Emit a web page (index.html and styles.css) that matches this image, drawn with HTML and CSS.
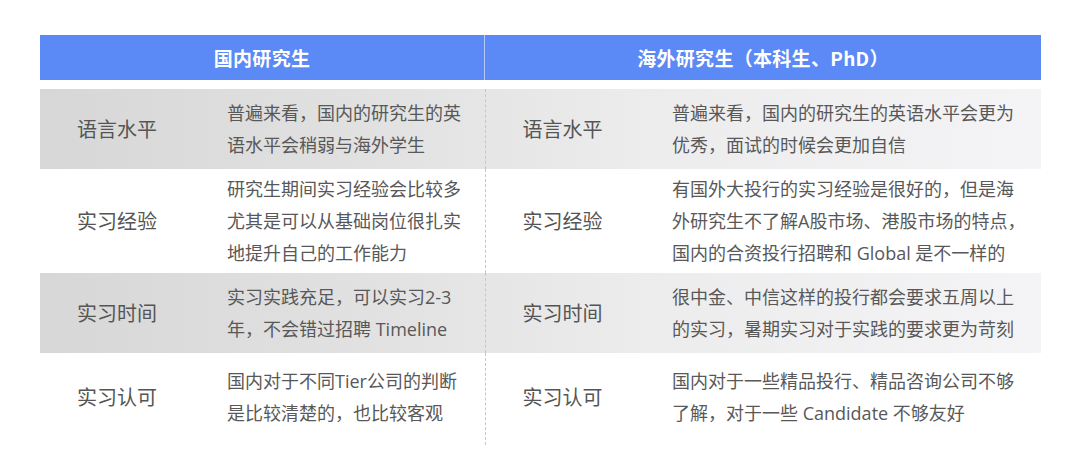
FILE: index.html
```html
<!DOCTYPE html>
<html lang="zh-CN">
<head>
<meta charset="utf-8">
<title>国内研究生 vs 海外研究生</title>
<link rel="stylesheet" href="styles.css">
</head>
<body>
<div class="page">
  <div class="table">
    <div class="head">
      <div class="head-cell head-left">国内研究生</div>
      <div class="head-cell">海外研究生（本科生、PhD）</div>
    </div>
    <div class="row row-gray">
      <div class="label">语言水平</div>
      <div class="desc">普遍来看，国内的研究生的英<br>语水平会稍弱与海外学生</div>
      <div class="label split">语言水平</div>
      <div class="desc">普遍来看，国内的研究生的英语水平会更为<br>优秀，面试的时候会更加自信</div>
    </div>
    <div class="row row-tall">
      <div class="label">实习经验</div>
      <div class="desc">研究生期间实习经验会比较多<br>尤其是可以从基础岗位很扎实<br>地提升自己的工作能力</div>
      <div class="label split">实习经验</div>
      <div class="desc">有国外大投行的实习经验是很好的，但是海<br>外研究生不了解A股市场、港股市场的特点，<br>国内的合资投行招聘和 Global 是不一样的</div>
    </div>
    <div class="row row-gray">
      <div class="label">实习时间</div>
      <div class="desc">实习实践充足，可以实习2-3<br>年，不会错过招聘 Timeline</div>
      <div class="label split">实习时间</div>
      <div class="desc">很中金、中信这样的投行都会要求五周以上<br>的实习，暑期实习对于实践的要求更为苛刻</div>
    </div>
    <div class="row row-last">
      <div class="label">实习认可</div>
      <div class="desc">国内对于不同Tier公司的判断<br>是比较清楚的，也比较客观</div>
      <div class="label split">实习认可</div>
      <div class="desc">国内对于一些精品投行、精品咨询公司不够<br>了解，对于一些 Candidate 不够友好</div>
    </div>
  </div>
</div>
</body>
</html>
```

FILE: styles.css
```css
html, body {
  margin: 0;
  padding: 0;
  background: #ffffff;
}

body {
  width: 1080px;
  height: 473px;
  overflow: hidden;
  font-family: "Open Sans", "Noto Sans CJK SC", sans-serif;
  color: #585858;
}

.page {
  padding: 35px 39px 0 40px;
}

.table {
  width: 1001px;
  display: flex;
  flex-direction: column;
}

.head {
  display: grid;
  grid-template-columns: 445px 1fr;
  height: 45px;
  background: #5b89f5;
  margin-bottom: 9px;
}

.head-cell {
  display: flex;
  align-items: center;
  justify-content: center;
  color: #ffffff;
  font-family: "Noto Sans CJK SC", sans-serif;
  font-weight: 700;
  font-size: 19px;
  letter-spacing: 0.3px;
}

.head-left {
  border-right: 1px solid rgba(255, 255, 255, 0.55);
}

.row {
  display: grid;
  grid-template-columns: 154px 291px 154px 1fr;
  align-items: stretch;
}

.row-gray {
  background: linear-gradient(to right, #d7d7d7 0%, #e2e2e2 35%, #ececed 60%, #f4f4f6 100%);
}

.label,
.desc {
  display: flex;
  align-items: center;
  padding: 8px 0;
}

.label {
  justify-content: center;
  font-family: "Noto Sans CJK SC", sans-serif;
  font-size: 20px;
  line-height: 32px;
  color: #555555;
}

.desc {
  padding-left: 33px;
  font-size: 18px;
  line-height: 32px;
  white-space: nowrap;
  color: #585858;
}

.split {
  border-left: 1px dashed #c6c6c6;
}

.row-tall .label,
.row-tall .desc {
  padding-top: 4px;
  padding-bottom: 4px;
}

.row-last .label,
.row-last .desc {
  padding-top: 12px;
  padding-bottom: 16px;
}
```
